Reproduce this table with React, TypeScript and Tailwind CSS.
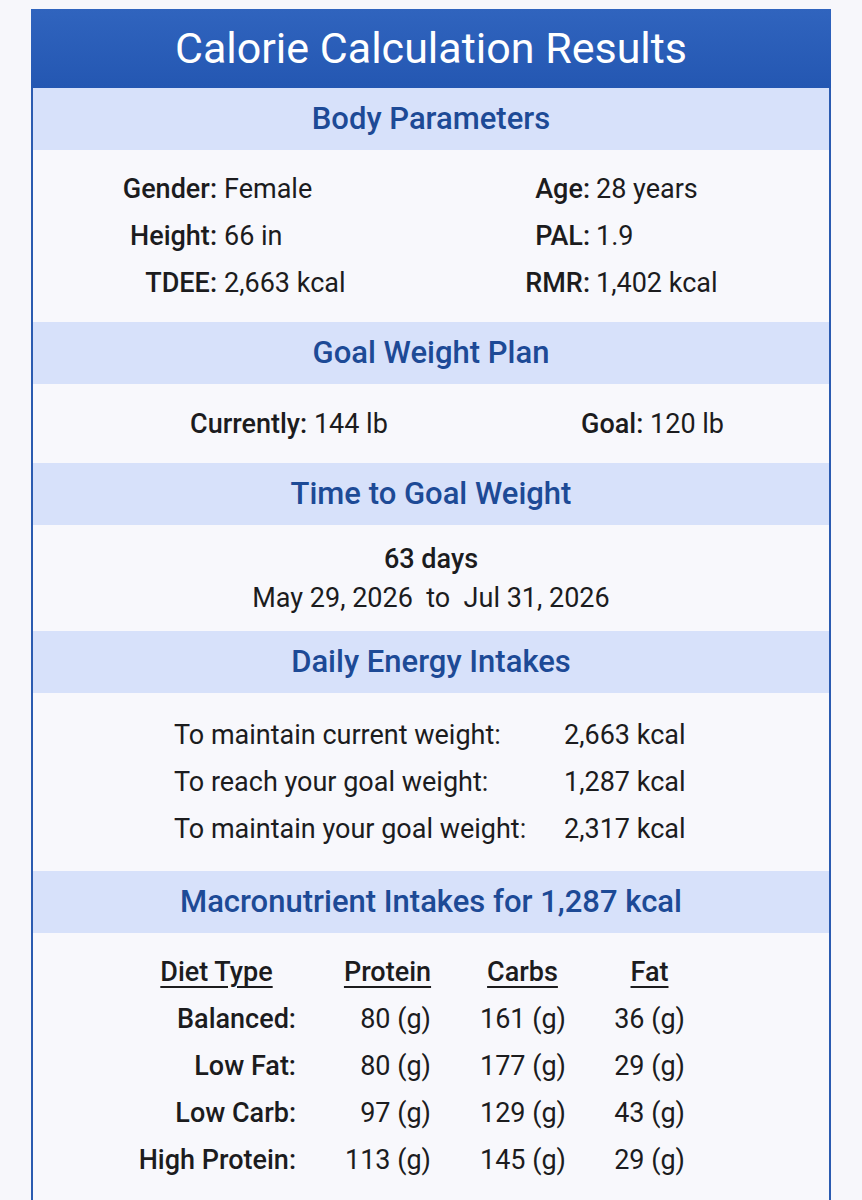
const font = { fontFamily: "Roboto, 'Noto Sans', sans-serif" };

function Heading({ children }: { children: React.ReactNode }) {
    return (
        <div className="h-[62px] bg-[#d7e1fa] flex items-center justify-center text-[31px] font-medium text-[#1d4a96]">
            {children}
        </div>
    );
}

const bodyParams = [
    ["Gender", "Female", "Age", "28 years"],
    ["Height", "66 in", "PAL", "1.9"],
    ["TDEE", "2,663 kcal", "RMR", "1,402 kcal"],
];

const intakes = [
    ["To maintain current weight:", "2,663 kcal"],
    ["To reach your goal weight:", "1,287 kcal"],
    ["To maintain your goal weight:", "2,317 kcal"],
];

const macros = [
    ["Balanced:", "80 (g)", "161 (g)", "36 (g)"],
    ["Low Fat:", "80 (g)", "177 (g)", "29 (g)"],
    ["Low Carb:", "97 (g)", "129 (g)", "43 (g)"],
    ["High Protein:", "113 (g)", "145 (g)", "29 (g)"],
];

export default function App() {
    return (
        <div className="min-h-[1200px] bg-[#f7f7fb] pt-[9px]" style={font}>
            <div className="ml-[31px] w-[800px] border-x-2 border-[#2b5bb0] bg-[#f8f8fc] text-[#1c1c1e] text-[27px] min-h-[1191px]">
                <div className="h-[79px] -mx-[2px] bg-gradient-to-b from-[#3064be] to-[#2457b2] flex items-center justify-center text-white text-[43px]">
                    Calorie Calculation Results
                </div>

                <Heading>Body Parameters</Heading>
                <div className="pt-[16px] pb-[15px] grid grid-cols-[184px_251px_122px_1fr] leading-[47px]">
                    {bodyParams.map((r) => (
                        <div key={r[0]} className="contents">
                            <span className="text-right font-medium">{r[0]}:</span>
                            <span className="pl-[7px]">{r[1]}</span>
                            <span className="text-right font-medium">{r[2]}:</span>
                            <span className="pl-[6px]">{r[3]}</span>
                        </div>
                    ))}
                </div>

                <Heading>Goal Weight Plan</Heading>
                <div className="h-[79px] pt-[2px] flex items-center justify-between pl-[157px] pr-[105px]">
                    <span>
                        <span className="font-medium">Currently:</span> 144 lb
                    </span>
                    <span>
                        <span className="font-medium">Goal:</span> 120 lb
                    </span>
                </div>

                <Heading>Time to Goal Weight</Heading>
                <div className="pt-[15px] pb-[13px] flex flex-col items-center leading-[39px]">
                    <span className="font-medium">63 days</span>
                    <span className="whitespace-pre">May 29, 2026  to  Jul 31, 2026</span>
                </div>

                <Heading>Daily Energy Intakes</Heading>
                <div className="pt-[19px] pb-[18px] pl-[141px] grid grid-cols-[390px_auto] leading-[47px]">
                    {intakes.map((r) => (
                        <div key={r[0]} className="contents">
                            <span>{r[0]}</span>
                            <span>{r[1]}</span>
                        </div>
                    ))}
                </div>

                <Heading>Macronutrient Intakes for 1,287 kcal</Heading>
                <div className="pt-[16px] pl-[104px] grid grid-cols-[159px_87px_87px_71px] gap-x-[48px] leading-[47px] whitespace-nowrap">
                    <span className="flex justify-center font-medium underline underline-offset-[5px]">Diet Type</span>
                    <span className="flex justify-center font-medium underline underline-offset-[5px]">Protein</span>
                    <span className="flex justify-center font-medium underline underline-offset-[5px]">Carbs</span>
                    <span className="flex justify-center font-medium underline underline-offset-[5px]">Fat</span>
                    {macros.map((r) => (
                        <div key={r[0]} className="contents">
                            <span className="flex justify-end font-medium">{r[0]}</span>
                            <span className="flex justify-end">{r[1]}</span>
                            <span className="flex justify-end">{r[2]}</span>
                            <span className="flex justify-end">{r[3]}</span>
                        </div>
                    ))}
                </div>
            </div>
        </div>
    );
}
